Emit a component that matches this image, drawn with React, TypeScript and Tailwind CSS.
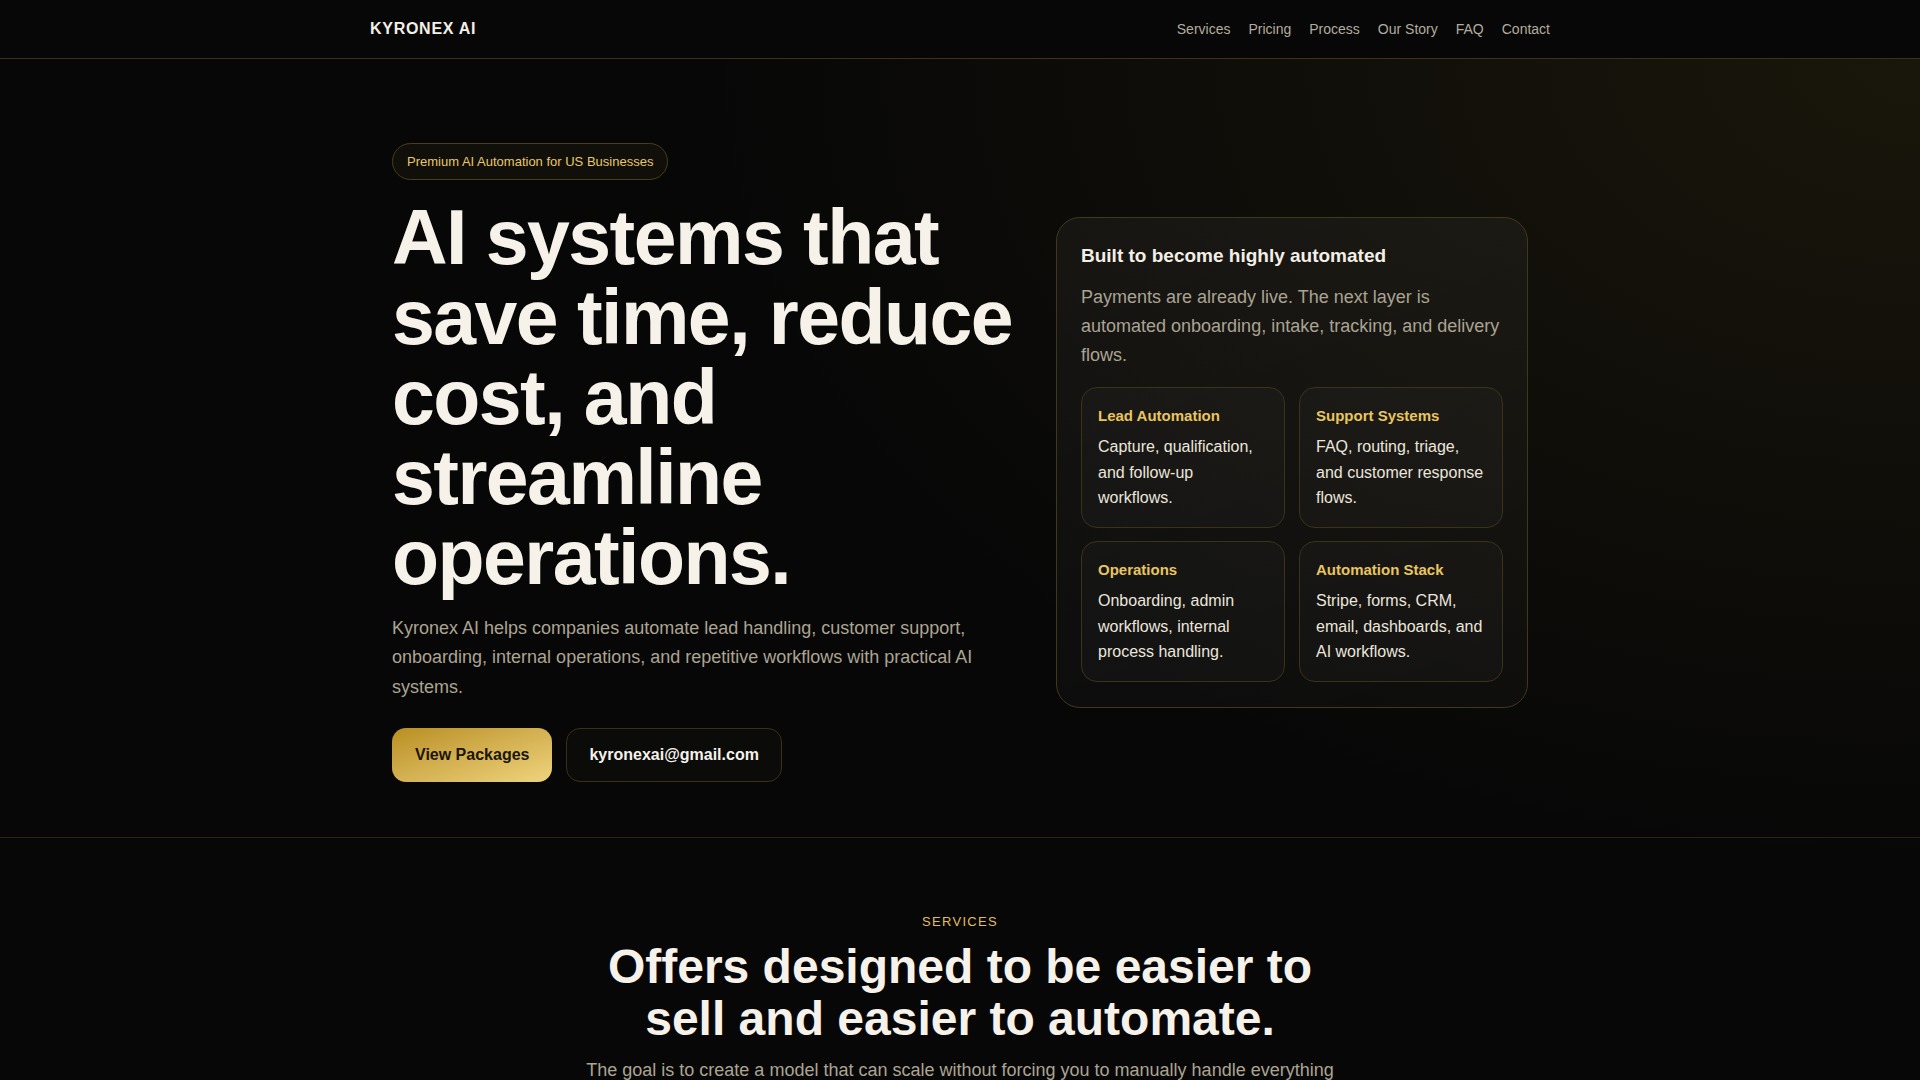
export default function App() {
  const navLinks = ['Services', 'Pricing', 'Process', 'Our Story', 'FAQ', 'Contact'];

  const features = [
    { title: 'Lead Automation', desc: 'Capture, qualification, and follow-up workflows.' },
    { title: 'Support Systems', desc: 'FAQ, routing, triage, and customer response flows.' },
    { title: 'Operations', desc: 'Onboarding, admin workflows, internal process handling.' },
    { title: 'Automation Stack', desc: 'Stripe, forms, CRM, email, dashboards, and AI workflows.' },
  ];

  return (
    <div className="min-h-screen bg-[#070707] font-['Liberation_Sans',Arial,sans-serif] text-[#f6f2ea]">
      {/* header */}
      <header className="h-[59px] border-b border-[#3d3219] bg-[#070707]">
        <div className="mx-auto flex h-full max-w-[1180px] items-center justify-between">
          <div className="text-[16px] font-bold tracking-[0.045em] text-[#f3efe6]">KYRONEX AI</div>
          <nav className="flex items-center gap-[18px] text-[14px] text-[#b3ac9e]">
            {navLinks.map((l) => (
              <a key={l} href="#" className="hover:text-white">
                {l}
              </a>
            ))}
          </nav>
        </div>
      </header>

      <main className="bg-[radial-gradient(ellipse_85%_95%_at_100%_0%,rgba(212,175,55,0.09),transparent_75%)]">
        {/* hero */}
        <section className="border-b border-[#2b2414]">
          <div className="mx-auto grid max-w-[1136px] grid-cols-[632px_472px] items-center gap-x-8 pb-[55px] pt-[84px]">
            <div>
              <div className="inline-flex h-[37px] items-center rounded-full border border-[#4a3d1a] bg-[rgba(212,175,55,0.05)] px-[14px] text-[13px] text-[#e8c86a]">
                Premium AI Automation for US Businesses
              </div>
              <h1 className="mt-[17px] text-[77px] font-bold leading-[80px] tracking-[-0.02em] text-[#f6f2ea]">
                AI systems that save time, reduce cost, and streamline operations.
              </h1>
              <p className="mt-[17px] text-[18px] leading-[1.63] text-[#aca493]">
                Kyronex AI helps companies automate lead handling, customer support, onboarding, internal operations, and
                repetitive workflows with practical AI systems.
              </p>
              <div className="mt-[26px] flex gap-[14px]">
                <a
                  href="#"
                  className="flex h-[54px] items-center rounded-[14px] bg-gradient-to-br from-[#b98f1e] to-[#efd47c] px-[23px] text-[16px] font-bold text-[#1a1509]"
                >
                  View Packages
                </a>
                <a
                  href="#"
                  className="flex h-[54px] items-center rounded-[14px] border border-[#3a3018] bg-[#0b0b0a] px-[22px] text-[16px] font-bold text-[#f6f2ea]"
                >
                  kyronexai@gmail.com
                </a>
              </div>
            </div>

            <div className="rounded-[24px] border border-[#41371b] bg-[linear-gradient(160deg,rgba(255,255,255,0.045),rgba(255,255,255,0.02))] px-[24px] pb-[25px] pt-[25px]">
              <h3 className="text-[19px] font-bold leading-[26px] text-[#f3efe6]">Built to become highly automated</h3>
              <p className="mt-[14px] text-[18px] leading-[29px] text-[#aaa393]">
                Payments are already live. The next layer is automated onboarding, intake, tracking, and delivery flows.
              </p>
              <div className="mt-[17px] grid grid-cols-2 gap-x-[14px] gap-y-[13px]">
                {features.map((f) => (
                  <div
                    key={f.title}
                    className="rounded-[16px] border border-[#3b321a] bg-[rgba(255,255,255,0.025)] px-[16px] pb-[16px] pt-[18px]"
                  >
                    <div className="text-[15px] font-bold leading-[20px] text-[#e9c55f]">{f.title}</div>
                    <p className="mt-[8px] text-[16px] leading-[1.6] text-[#ebe6dc]">{f.desc}</p>
                  </div>
                ))}
              </div>
            </div>
          </div>
        </section>

        {/* services */}
        <section className="pb-[80px] pt-[76px] text-center">
          <div className="text-[13px] uppercase leading-[16px] tracking-[0.1em] text-[#e0bf62]">Services</div>
          <h2 className="mx-auto mt-[11px] max-w-[780px] text-[48px] font-bold leading-[52px] text-[#f6f2ea]">
            Offers designed to be easier to sell and easier to automate.
          </h2>
          <p className="mx-auto mt-[11px] max-w-[780px] text-[18px] leading-[29px] text-[#aca493]">
            The goal is to create a model that can scale without forcing you to manually handle everything yourself.
          </p>
        </section>
      </main>
    </div>
  );
}
